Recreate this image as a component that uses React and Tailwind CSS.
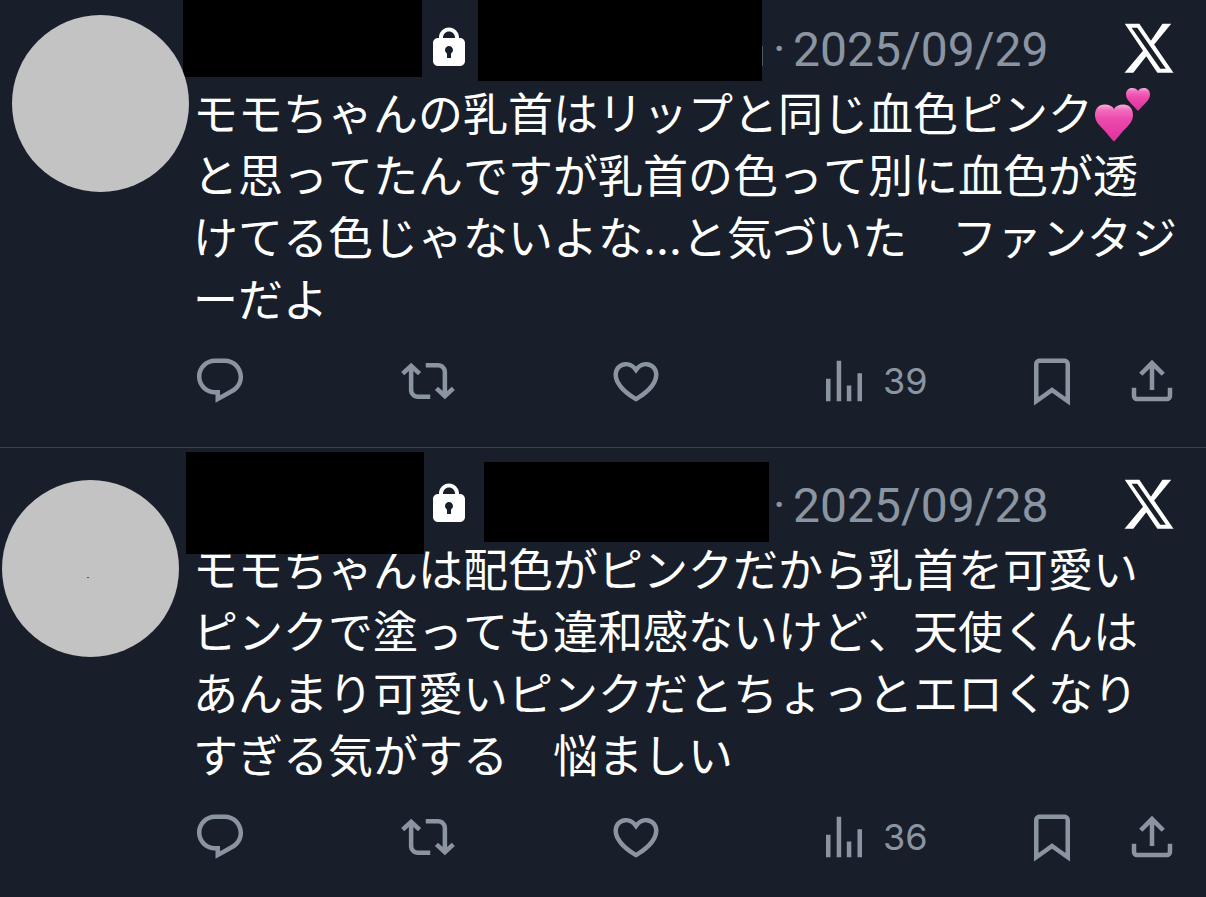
const ICONS = {
  lock: 'M17.5 7H17v-.25c0-2.76-2.24-5-5-5s-5 2.24-5 5V7h-.5C5.12 7 4 8.12 4 9.5v9C4 19.88 5.12 21 6.5 21h11c1.39 0 2.5-1.12 2.5-2.5v-9C20 8.12 18.89 7 17.5 7zM13 14.73V17h-2v-2.27c-.59-.34-1-.99-1-1.73 0-1.1.9-2 2-2 1.11 0 2 .9 2 2 0 .74-.4 1.39-1 1.73zM15 7H9v-.25c0-1.66 1.35-3 3-3 1.66 0 3 1.34 3 3V7z',
  x: 'M2.3 2.3H8.15L12.75 9.1 17.4 2.3H20.9L14.05 10.6 21.8 21.9H15.35L10.9 15.3 5.7 21.9H2.2L9.6 13.05zM5.05 3.9L16.5 20.3H18.75L7.3 3.9z',
  reply: 'M1.751 10c0-4.42 3.584-8 8.005-8h4.366c4.49 0 8.129 3.64 8.129 8.13 0 2.96-1.607 5.68-4.196 7.11l-8.054 4.46v-3.69h-.067c-4.49.1-8.183-3.51-8.183-8.01zm8.005-6c-3.317 0-6.005 2.69-6.005 6 0 3.37 2.77 6.08 6.138 6.01l.351-.01h1.761v2.3l5.087-2.81c1.951-1.08 3.163-3.13 3.163-5.36 0-3.39-2.744-6.13-6.129-6.13H9.756z',
  repost: 'M4.5 3.88l4.432 4.14-1.364 1.46L5.5 7.55V16c0 1.1.896 2 2 2H13v2H7.5c-2.209 0-4-1.79-4-4V7.55L1.432 9.48.068 8.02 4.5 3.88zM16.5 6H11V4h5.5c2.209 0 4 1.79 4 4v8.45l2.068-1.93 1.364 1.46-4.432 4.14-4.432-4.14 1.364-1.46 2.068 1.93V8c0-1.1-.896-2-2-2z',
  like: 'M16.697 5.5c-1.222-.06-2.679.51-3.89 2.16l-.805 1.09-.806-1.09C9.984 6.01 8.526 5.44 7.304 5.5c-1.243.07-2.349.78-2.91 1.91-.552 1.12-.633 2.78.479 4.82 1.074 1.97 3.257 4.27 7.129 6.61 3.87-2.34 6.052-4.64 7.126-6.61 1.111-2.04 1.03-3.7.477-4.82-.561-1.13-1.666-1.84-2.908-1.91zm4.187 7.69c-1.351 2.48-4.001 5.12-8.379 7.67l-.503.3-.504-.3c-4.379-2.55-7.029-5.19-8.382-7.67-1.36-2.5-1.41-4.86-.514-6.67.887-1.79 2.647-2.91 4.601-3.01 1.651-.09 3.368.56 4.798 2.01 1.429-1.45 3.146-2.1 4.796-2.01 1.954.1 3.714 1.22 4.601 3.01.896 1.81.846 4.17-.514 6.67z',
  views: 'M8.75 21V3h2v18h-2zM18 21V8.5h2V21h-2zM4 21l.004-10h2L6 21H4zm9.248 0v-7h2v7h-2z',
  bookmark: 'M4 4.5C4 3.12 5.119 2 6.5 2h11C18.881 2 20 3.12 20 4.5v18.44l-8-5.71-8 5.71V4.5zM6.5 4c-.276 0-.5.22-.5.5v14.56l6-4.29 6 4.29V4.5c0-.28-.224-.5-.5-.5h-11z',
  share: 'M12 2.59l5.7 5.7-1.41 1.42L13 6.41V16h-2V6.41l-3.3 3.3-1.41-1.42L12 2.59zM21 15l-.02 3.51c0 1.38-1.12 2.49-2.5 2.49H5.5C4.11 21 3 19.88 3 18.5V15h2v3.5c0 .28.22.5.5.5h12.98c.28 0 .5-.22.5-.5L19 15h2z',
};

const posts = [
  {
    id: 1,
    date: '2025/09/29',
    views: 39,
    top: 'pt-[18px]',
    avatar: 'ml-3 -mt-[3px]',
    nameMask: '-left-[10px] -top-[18px] w-[239px] h-[77px]',
    handleMask: 'left-[5px] -top-[18px] w-[284px] h-[81px]',
    handleEdge: true,
    lines: [
      <>モモちゃんの乳首はリップと同じ血色ピンク<TwoHearts /></>,
      'と思ってたんですが乳首の色って別に血色が透',
      'けてる色じゃないよな…と気づいた　ファンタジ',
      'ーだよ',
    ],
  },
  {
    id: 2,
    date: '2025/09/28',
    views: 36,
    top: 'pt-[26px]',
    avatar: 'ml-[2px] mt-[6px]',
    avatarDot: true,
    nameMask: '-left-[7px] -top-[22px] w-[238px] h-[102px]',
    handleMask: 'left-[11px] -top-3 w-[285px] h-[80px]',
    lines: [
      'モモちゃんは配色がピンクだから乳首を可愛い',
      'ピンクで塗っても違和感ないけど、天使くんは',
      'あんまり可愛いピンクだとちょっとエロくなり',
      'すぎる気がする　悩ましい',
    ],
  },
];

function Icon({ name, className }) {
  return (
    <svg viewBox="0 0 24 24" fill="currentColor" aria-hidden="true" className={className}>
      <path fillRule="evenodd" d={ICONS[name]} />
    </svg>
  );
}

function TwoHearts() {
  return (
    <svg viewBox="0 0 58 56" role="img" aria-label="💕" className="inline-block w-[58px] h-[56px] -mt-2 align-[-12px]">
      <defs>
        <linearGradient id="heart" x1="0" y1="0" x2="0" y2="1">
          <stop offset="0" stopColor="#fbb0dc" />
          <stop offset="0.15" stopColor="#f26dbd" />
          <stop offset="0.4" stopColor="#ec4aac" />
          <stop offset="1" stopColor="#e0309f" />
        </linearGradient>
      </defs>
      <path
        fill="url(#heart)"
        d="M21 54.5C19 53 14 46 8 40C3.500 35.500 2 31.500 2 28C2 21.500 6 17.500 11.500 17.500C16 17.500 19.500 19 21 22C22.500 19 26 17.500 30.500 17.500C36 17.500 40 21.500 40 28C40 31.500 38.500 35.500 34 40C28 46 23 53 21 54.500Z"
      />
      <path
        fill="url(#heart)"
        d="M45 24C43.500 22.500 40 18.500 37 15.500C34 12.500 33 10 33 7.500C33 3.500 35.500 1 39 1C42 1 44 2 45 4C46 2 48 1 51 1C54.500 1 57 3.500 57 7.500C57 10 56 12.500 53 15.500C50 18.500 46.500 22.500 45 24Z"
      />
    </svg>
  );
}

function Action({ icon, label, count, className = '' }) {
  return (
    <button type="button" aria-label={label} className={`flex items-center gap-3 ${className}`}>
      <Icon name={icon} className="w-[54px] h-[54px] shrink-0" />
      {count && <span className="text-[36px] leading-none">{count}</span>}
    </button>
  );
}

function Post({ post }) {
  return (
    <article className={`flex pr-[27px] pb-[39px] border-b border-[#38444d] ${post.top}`}>
      <div className="w-[193px] shrink-0">
        <div className={`relative z-10 w-[177px] h-[177px] rounded-full bg-[#c3c3c3] ${post.avatar}`}>
          {post.avatarDot && <span className="absolute left-[85px] top-[97px] w-[2px] h-px bg-[#555]" />}
        </div>
      </div>

      <div className="flex-1 min-w-0">
        <header className="flex items-center h-[60px]">
          <div className="relative w-[232px] h-full shrink-0">
            <span className={`absolute bg-black z-[1] ${post.nameMask}`} />
          </div>
          <Icon name="lock" className="w-12 h-12 shrink-0" />
          <div className="relative w-[300px] h-full shrink-0">
            <span className={`absolute bg-black z-[1] ${post.handleMask}`} />
            {post.handleEdge && <span className="absolute left-[289px] top-7 w-px h-5 bg-[#4b5560]" />}
          </div>
          <div className="flex pt-1 font-[Roboto,sans-serif] text-[48px] leading-none text-[#8b95a2]">
            <span className="w-5">·</span>
            <time>{post.date}</time>
          </div>
          <Icon name="x" className="w-[60px] h-[60px] ml-auto shrink-0" />
        </header>

        <div className="mt-[6px] text-[45px] leading-[62px] whitespace-nowrap [font-kerning:none]">
          {post.lines.map((line, i) => (
            <p key={i} className="h-[62px]">{line}</p>
          ))}
        </div>

        <footer className="flex mt-[22px] text-[#8b95a2]">
          <Action icon="reply" label="返信" className="flex-1" />
          <Action icon="repost" label="リポスト" className="flex-1" />
          <Action icon="like" label="いいね" className="flex-1" />
          <Action icon="views" label="表示回数" count={post.views} className="flex-1" />
          <Action icon="bookmark" label="ブックマーク" />
          <Action icon="share" label="共有" className="ml-[46px]" />
        </footer>
      </div>
    </article>
  );
}

export default function App() {
  return (
    <main
      lang="ja"
      className="min-h-screen overflow-hidden bg-[#181f2a] text-white font-[Inter,'Noto_Sans_CJK_JP',sans-serif]"
    >
      {posts.map((post) => (
        <Post key={post.id} post={post} />
      ))}
    </main>
  );
}
